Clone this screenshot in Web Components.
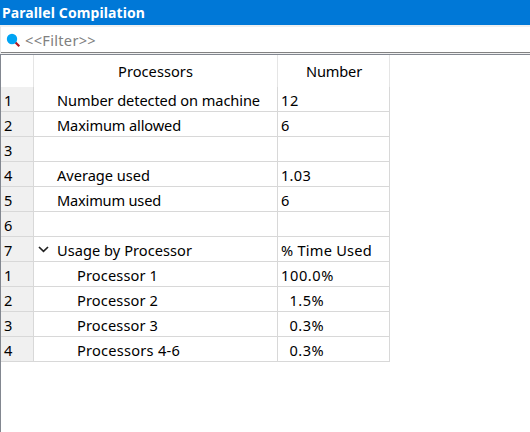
<!DOCTYPE html>
<html lang="en"><head><meta charset="utf-8"><title>Parallel Compilation</title>
<style>html,body{margin:0;height:100%;background:#fff;overflow:hidden}</style></head><body>
<report-panel heading="Parallel Compilation">
<filter-box slot="filter" placeholder="&lt;&lt;Filter&gt;&gt;"></filter-box>
<tree-table></tree-table>
</report-panel>
<script>
const shadow=(el,html)=>{el.attachShadow({mode:'open'}).innerHTML=html;return el.shadowRoot};

customElements.define('fit-text',class extends HTMLElement{
  connectedCallback(){
    shadow(this,`<style>:host{display:inline-block;white-space:pre}</style><slot></slot>`);
    const target=+this.getAttribute('width');
    if(target){
      const natural=this.getBoundingClientRect().width;
      this.style.letterSpacing=((target-natural)/this.textContent.length)+'px';
    }
  }
});

customElements.define('report-panel',class extends HTMLElement{
  connectedCallback(){
    shadow(this,`<style>
:host{display:flex;flex-direction:column;height:432px;font:14.6px/24px "Noto Sans",sans-serif;color:#000}
header{height:25px;box-sizing:border-box;padding-left:2px;background:#0078d7;color:#fff;font-weight:700;line-height:26px;font-size:14px}
main{flex:1;border-top:1px solid #828790;border-left:1px solid #828790}
</style><header><fit-text width="143">${this.getAttribute('heading')}</fit-text></header>
<slot name="filter"></slot><main><slot></slot></main>`);
  }
});

customElements.define('filter-box',class extends HTMLElement{
  connectedCallback(){
    const label=this.getAttribute('placeholder').replace(/</g,'&lt;').replace(/>/g,'&gt;');
    shadow(this,`<style>
:host{display:flex;align-items:center;box-sizing:border-box;height:29px;border-top:2px solid #f0f0f0;border-left:1px solid #e8e8e8;border-bottom:1px solid #f0f0f0;padding-left:5px;color:#808080;background:linear-gradient(#828282,#828282) bottom/100% 1px no-repeat #fff}
svg{width:15px;height:15px;margin-right:4px}
fit-text{line-height:25px;padding-top:1px}
</style><svg viewBox="0 0 15 15"><path d="M9 9l4.3 4.3" stroke="#b01820" stroke-width="2.2"/><circle cx="6" cy="6" r="5.2" fill="#00a4f4"/></svg><fit-text width="71">${label}</fit-text>`);
  }
});

customElements.define('table-row',class extends HTMLElement{
  connectedCallback(){
    const sub=this.hasAttribute('child'),open=this.hasAttribute('expanded');
    shadow(this,`<style>
:host{display:grid;grid-template-columns:33px 244px 112px;height:25px;width:389px}
div{box-sizing:border-box;border-right:1px solid #d8d8d8;border-bottom:1px solid #d8d8d8;padding:1px 0 0 3px;line-height:24px;height:25px;display:flex}
.index{background:#f0f0f0;padding-left:3px}
.name{padding-left:${sub?43:23}px}
.open{padding-left:4px}
svg{width:12px;height:12px;margin:5px 7px 0 0}
</style><div class="index"><slot name="index"></slot></div><div class="name ${open?'open':''}">${open?'<svg viewBox="0 0 12 12"><path d="M1 4L5.5 8.3 10 4" fill="none" stroke="#222" stroke-width="1.7"/></svg>':''}<slot name="name"></slot></div><div><slot name="value"></slot></div>`);
  }
});

customElements.define('tree-table',class extends HTMLElement{
  connectedCallback(){
    const rows=[['1','Number detected on machine',203,'12',18],['2','Maximum allowed',124,'6',9],['3'],['4','Average used',93,'1.03',30],['5','Maximum used',104,'6',9],['6'],['7','Usage by Processor',135,'% Time Used',91,'expanded'],['1','Processor 1',81,'100.0%',53,'child'],['2','Processor 2',81,'  1.5%',43,'child'],['3','Processor 3',81,'  0.3%',43,'child'],['4','Processors 4-6',103,'  0.3%',43,'child']];
    const cell=(slot,t,w)=>t?`<fit-text slot="${slot}" width="${w}">${t}</fit-text>`:'';
    shadow(this,`<style>
:host{display:block}
.head{display:grid;grid-template-columns:33px 244px 112px;width:389px;height:32px}
.head div{box-sizing:border-box;border-right:1px solid #e5e5e5;text-align:center;line-height:32px}
.head div:last-child{padding-left:1px}
</style><div class="head"><div></div><div><fit-text width="75">Processors</fit-text></div><div><fit-text width="56">Number</fit-text></div></div>${rows.map(([i,n,nw,v,vw,f=''])=>`<table-row ${f}>${cell('index',i,9)}${cell('name',n,nw)}${cell('value',v,vw)}</table-row>`).join('')}`);
  }
});
</script></body></html>
